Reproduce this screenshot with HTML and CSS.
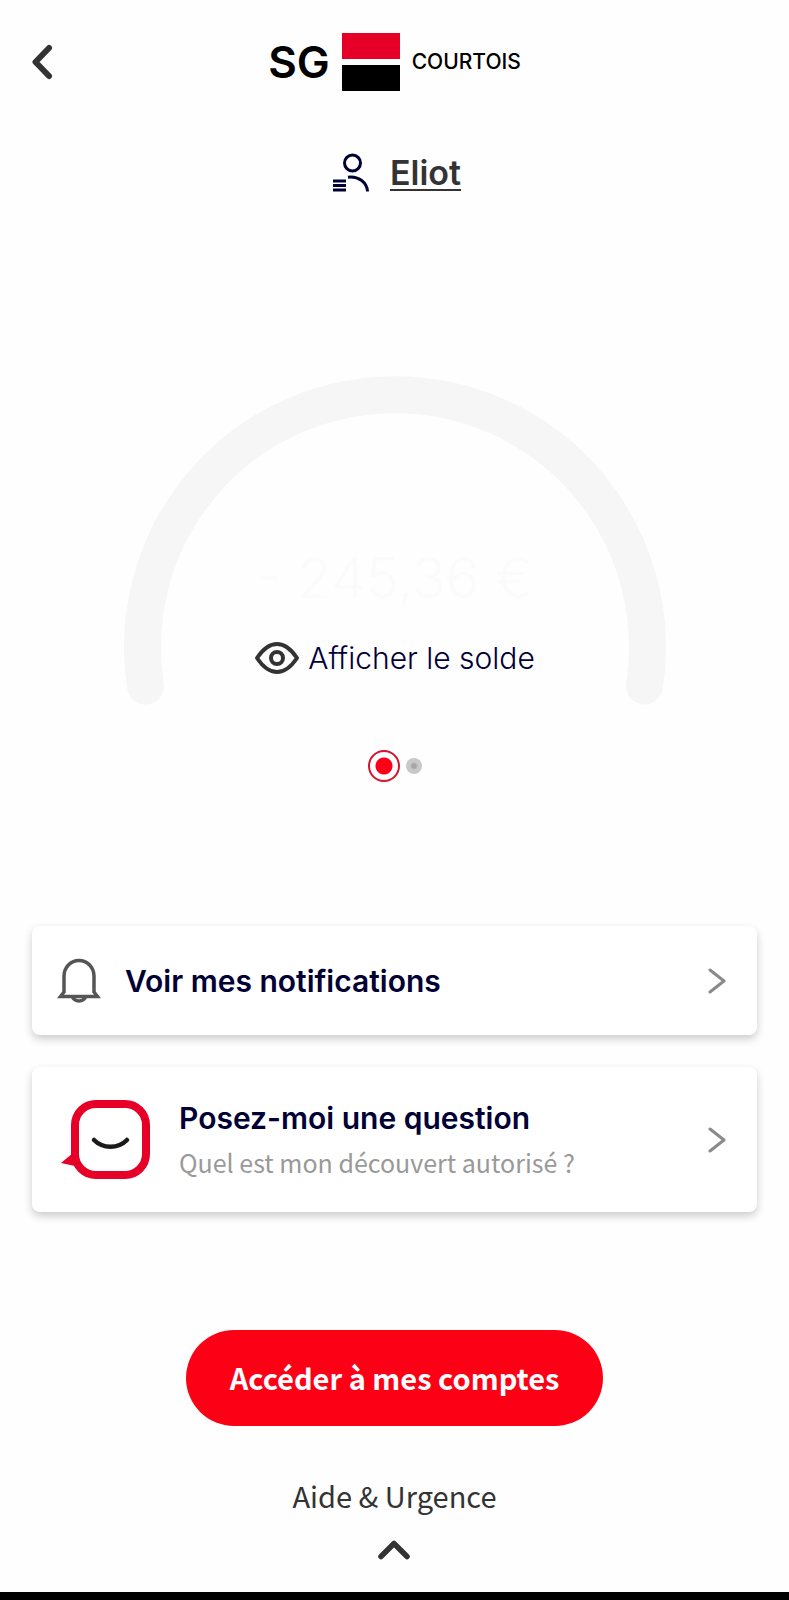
FILE: index.html
```html
<!DOCTYPE html>
<html lang="fr">
<head>
<meta charset="utf-8">
<meta name="viewport" content="width=device-width, initial-scale=1">
<title>SG Courtois</title>
<link rel="stylesheet" href="styles.css">
</head>
<body>
<div class="screen">
  <header class="header">
    <button class="icon-button" type="button" aria-label="Retour">
      <svg width="22" height="36" viewBox="0 0 22 36" fill="none" stroke="#333" stroke-width="6" stroke-linecap="round" stroke-linejoin="round"><path d="M17 4L3.500 18 17 32"/></svg>
    </button>
    <div class="brand">
      <span class="brand-name">SG</span>
      <svg width="58" height="58" viewBox="0 0 58 58"><path fill="#e60028" d="M0 0h58v26H0z"/><path d="M0 32h58v26H0z"/></svg>
      <span class="brand-bank">COURTOIS</span>
    </div>
  </header>

  <main class="main">
    <a class="user" href="#">
      <svg width="38" height="40" viewBox="0 0 38 40" fill="none" stroke="#010035" stroke-width="3"><circle cx="20.500" cy="10" r="8"/><path d="M16 24.200c10-1.500 19 5 19.500 14.300M1 28h13M1 32.500h13M1 37h13"/></svg>
      <span class="user-name">Eliot</span>
    </a>

    <section class="gauge">
      <svg class="gauge-arc" viewBox="0 0 542 329" fill="none" stroke="#f6f6f6" stroke-width="37" stroke-linecap="round"><path d="M21.500 310A252.500 252.500 0 1 1 520.500 310"/></svg>
      <div class="balance">
        <p class="amount">- 245,36 €</p>
        <button class="reveal" type="button">
          <svg width="46" height="34" viewBox="0 0 46 34" fill="none" stroke="#333" stroke-width="4" stroke-linejoin="round"><path d="M3 17C9 8 15 3 23 3s14 5 20 14c-6 9-12 14-20 14S9 26 3 17z"/><circle cx="23" cy="17" r="6"/></svg>
          Afficher le solde
        </button>
      </div>
    </section>

    <div class="pager">
      <button class="dot dot-active" type="button" aria-label="Compte 1"></button>
      <button class="dot" type="button" aria-label="Compte 2"></button>
    </div>

    <nav class="cards">
      <a class="card" href="#">
        <svg width="44" height="46" viewBox="0 0 44 46" fill="none" stroke="#555" stroke-width="3.500"><path d="M7 34V18a15 15.500 0 0 1 30 0v16l3.500 4.500h-37zM15.500 38c0 6.500 13 6.500 13 0"/></svg>
        <span class="card-title">Voir mes notifications</span>
        <svg width="18" height="26" viewBox="0 0 18 26" fill="none" stroke="#8a8a8a" stroke-width="3" stroke-linecap="round" stroke-linejoin="round"><path d="M2 2l14 11L2 24"/></svg>
      </a>
      <a class="card card-tall" href="#">
        <svg width="90" height="80" viewBox="0 0 90 80" fill="none"><rect x="14" y="4" width="71" height="71" rx="21" stroke="#e60028" stroke-width="8"/><path fill="#e60028" d="M0 63l12-10 9 15-7-2z"/><path stroke="#1a1a1a" stroke-width="4.500" stroke-linecap="round" d="M33 40c9 9 24 9 33 0"/></svg>
        <span class="card-text">
          <span class="card-title">Posez-moi une question</span>
          <span class="card-hint">Quel est mon découvert autorisé ?</span>
        </span>
        <svg width="18" height="26" viewBox="0 0 18 26" fill="none" stroke="#8a8a8a" stroke-width="3" stroke-linecap="round" stroke-linejoin="round"><path d="M2 2l14 11L2 24"/></svg>
      </a>
    </nav>

    <button class="primary" type="button">Accéder à mes comptes</button>

    <button class="help" type="button">
      Aide &amp; Urgence
      <svg width="32" height="20" viewBox="0 0 32 20" fill="none" stroke="#333" stroke-width="5.500" stroke-linecap="round" stroke-linejoin="round"><path d="M3 16.500L16 3.500l13 13"/></svg>
    </button>
  </main>
  <div class="system-bar"></div>
</div>
</body>
</html>
```
FILE: styles.css
```css
* {
  box-sizing: border-box;
}

body {
  margin: 0;
  background: #fefefe;
  color: #333;
  font-family: Inter, "Open Sans", sans-serif;
}

button {
  border: 0;
  padding: 0;
  background: none;
  color: inherit;
  font: inherit;
  cursor: pointer;
}

a {
  color: inherit;
  text-decoration: none;
}

svg {
  display: block;
  flex-shrink: 0;
}

.screen {
  display: flex;
  flex-direction: column;
  min-height: 100vh;
}

.header {
  display: grid;
  grid-template-columns: 1fr auto 1fr;
  align-items: center;
  padding: 33px 32px 0;
}

.icon-button {
  justify-self: start;
}

.brand {
  display: flex;
  align-items: center;
  gap: 12px;
  color: #000;
}

.brand-name {
  font-size: 44px;
  font-weight: 600;
  line-height: 58px;
}

.brand-bank {
  font-size: 21px;
  font-weight: 500;
  line-height: 24px;
}

.main {
  display: flex;
  flex: 1;
  flex-direction: column;
  align-items: center;
  padding: 62px 32px 32px;
}

.user {
  display: flex;
  align-items: center;
  gap: 20px;
  padding-left: 4px;
}

.user-name {
  font-size: 34px;
  font-weight: 600;
  line-height: 40px;
  text-decoration: underline;
  text-decoration-thickness: 2px;
  text-underline-offset: 4px;
}

.gauge {
  display: grid;
  width: 75%;
  max-width: 542px;
  margin-top: 183px;
}

.gauge-arc,
.balance {
  grid-area: 1 / 1;
}

.gauge-arc {
  width: 100%;
}

.balance {
  display: flex;
  flex-direction: column;
  align-items: center;
  align-self: end;
  gap: 28px;
  padding-bottom: 27px;
}

.amount {
  margin: 0;
  color: #fbfbfb;
  font-size: 56px;
  font-weight: 300;
  line-height: 64px;
}

.reveal {
  display: flex;
  align-items: center;
  gap: 8px;
  color: #010035;
  font-size: 30px;
  font-weight: 300;
  line-height: 40px;
}

.pager {
  display: flex;
  align-items: center;
  gap: 6px;
  margin-top: 45px;
}

.dot {
  width: 16px;
  height: 16px;
  border-radius: 50%;
  background: radial-gradient(circle, #a5a5a5 2px, #c8c8c8 4px);
}

.dot-active {
  width: 32px;
  height: 32px;
  border: 2px solid #d5142d;
  background: radial-gradient(circle, #fc0016 8px, #fff 9px);
}

.cards {
  display: flex;
  flex-direction: column;
  align-self: stretch;
  gap: 32px;
  margin-top: 144px;
}

.card {
  display: flex;
  align-items: center;
  gap: 24px;
  min-height: 109px;
  padding: 16px 31px 16px 25px;
  border-radius: 8px;
  background: #fff;
  box-shadow: 0 4px 8px rgba(0, 0, 0, 0.2);
}

.card-tall {
  gap: 28px;
  min-height: 145px;
  padding-left: 29px;
}

.card-text {
  display: flex;
  flex: 1;
  flex-direction: column;
  gap: 4px;
}

.card-title {
  flex: 1;
  color: #010035;
  font-size: 30px;
  font-weight: 600;
  line-height: 40px;
}

.card-hint {
  color: #999;
  font-family: "Noto Sans CJK SC", "Open Sans", sans-serif;
  font-size: 25px;
  line-height: 40px;
}

.primary {
  margin-top: 118px;
  padding: 27px 44px 29px;
  border-radius: 48px;
  background: #fc0016;
  color: #fff;
  font-family: "Noto Sans CJK SC", "Open Sans", sans-serif;
  font-size: 29px;
  font-weight: 700;
  line-height: 40px;
}

.help {
  display: flex;
  flex-direction: column;
  align-items: center;
  gap: 25px;
  margin-top: 49px;
  font-family: "Noto Sans CJK SC", "Open Sans", sans-serif;
  font-size: 29px;
  line-height: 40px;
}

.system-bar {
  height: 9px;
  background: #000;
}
```
